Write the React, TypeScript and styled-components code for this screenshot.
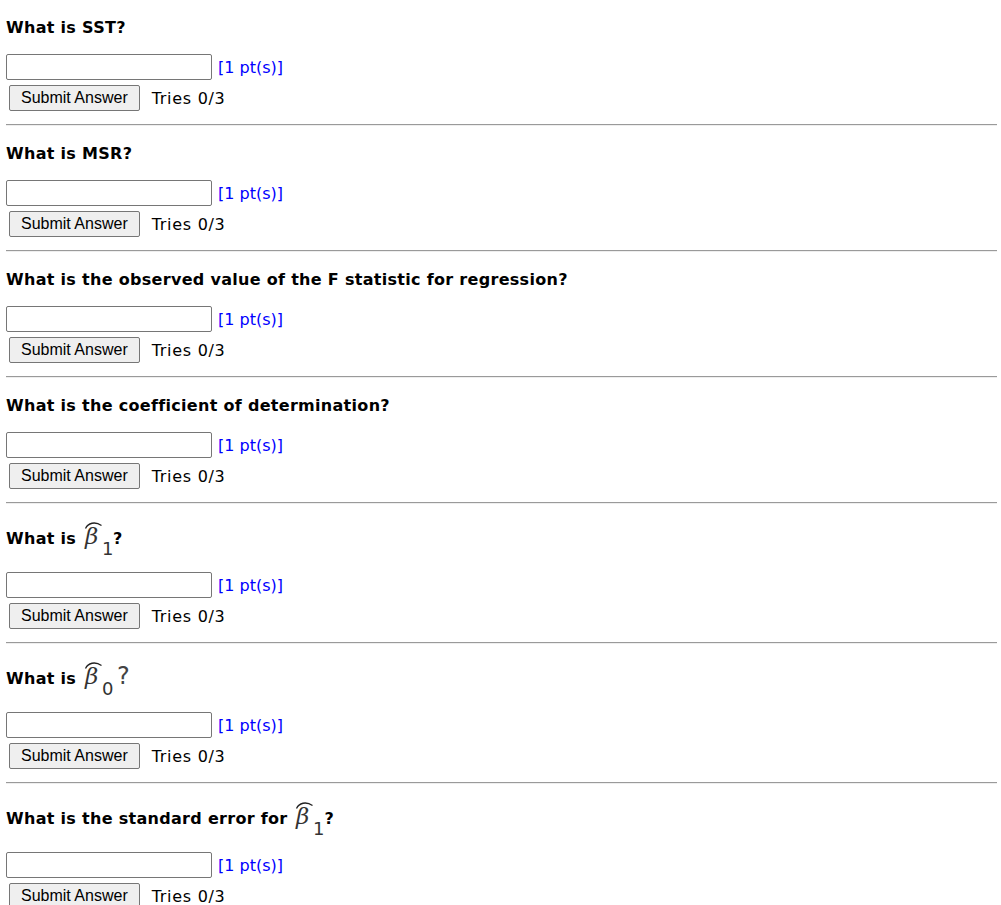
import * as React from 'react';
import styled, { createGlobalStyle } from 'styled-components';

const GlobalStyle = createGlobalStyle`
	body {
		margin: 0;
		background: #fff;
		color: #000;
		font-family: 'DejaVu Sans', Verdana, sans-serif;
	}
`;

const Page = styled.div`
	padding: 19px 4px 0 6px;
`;

const Question = styled.section`
	display: flex;
	flex-direction: column;
`;

const Title = styled.div`
	font-size: 16px;
	font-weight: bold;
	line-height: 18px;
	letter-spacing: 0.3px;
	white-space: nowrap;
`;

const AnswerRow = styled.div`
	display: flex;
	align-items: center;
	gap: 6px;
	margin-top: 17px;
`;

const AnswerInput = styled.input`
	box-sizing: border-box;
	width: 206px;
	height: 26px;
	margin: 0;
	padding: 1px 3px;
	border: 1px solid #767676;
	border-radius: 2px;
	font-size: 14px;
`;

const Points = styled.span`
	font-size: 16px;
	color: #0000ff;
`;

const SubmitRow = styled.div`
	display: flex;
	align-items: center;
	gap: 12px;
	margin-top: 5px;
	padding-left: 3px;
`;

const SubmitButton = styled.button`
	box-sizing: border-box;
	height: 26px;
	margin: 0;
	padding: 0 11px;
	font-family: 'Liberation Sans', Arial, sans-serif;
	font-size: 16px;
	color: #000;
	background: #efefef;
	border: 1px solid #767676;
	border-radius: 2px;
`;

const Tries = styled.span`
	font-size: 16px;
	letter-spacing: 0.7px;
	padding-top: 1px;
`;

const Rule = styled.hr`
	height: 0;
	margin: 13px 0 19px;
	border: 0;
	border-top: 1px solid #9a9a9a;
	border-bottom: 1px solid #eeeeee;
`;

const MathSvg = styled.svg`
	vertical-align: -11px;
	overflow: visible;
	font-weight: normal;
	letter-spacing: 0;
`;

interface HatBetaProps {
	sub: string;
	trailing?: string;
}

// beta with a wide hat and a subscript, drawn like the rendered TeX
const HatBeta: React.FC<HatBetaProps> = ({ sub, trailing }) => {
	const width = trailing ? 48 : 31;
	return (
		<MathSvg width={width} height={32} viewBox={`0 0 ${width} 32`}>
			<path d="M3.5 5.5 C 6 0, 13 -2, 19.5 2.5" fill="none" stroke="#222" strokeWidth="1.3" />
			<text
				x="3"
				y="21"
				fontFamily="'DejaVu Serif', serif"
				fontStyle="italic"
				fontWeight="normal"
				fontSize="23"
				fill="#333"
			>
				β
			</text>
			<text x="20" y="32" fontFamily="'DejaVu Sans', sans-serif" fontWeight="normal" fontSize="18" fill="#333">
				{sub}
			</text>
			{trailing && (
				<text x="35" y="21" fontFamily="'DejaVu Sans', sans-serif" fontWeight="normal" fontSize="24" fill="#444">
					{trailing}
				</text>
			)}
		</MathSvg>
	);
};

interface QuestionBlockProps {
	children: React.ReactNode;
	last?: boolean;
}

const QuestionBlock: React.FC<QuestionBlockProps> = ({ children, last }) => (
	<Question>
		<Title>{children}</Title>
		<AnswerRow>
			<AnswerInput type="text" />
			<Points>[1 pt(s)]</Points>
		</AnswerRow>
		<SubmitRow>
			<SubmitButton type="button">Submit Answer</SubmitButton>
			<Tries>Tries 0/3</Tries>
		</SubmitRow>
		{!last && <Rule />}
	</Question>
);

export default function App() {
	return (
		<Page>
			<GlobalStyle />
			<QuestionBlock>What is SST?</QuestionBlock>
			<QuestionBlock>What is MSR?</QuestionBlock>
			<QuestionBlock>What is the observed value of the F statistic for regression?</QuestionBlock>
			<QuestionBlock>What is the coefficient of determination?</QuestionBlock>
			<QuestionBlock>
				What is <HatBeta sub="1" />?
			</QuestionBlock>
			<QuestionBlock>
				What is <HatBeta sub="0" trailing="?" />
			</QuestionBlock>
			<QuestionBlock last>
				What is the standard error for <HatBeta sub="1" />?
			</QuestionBlock>
		</Page>
	);
}
